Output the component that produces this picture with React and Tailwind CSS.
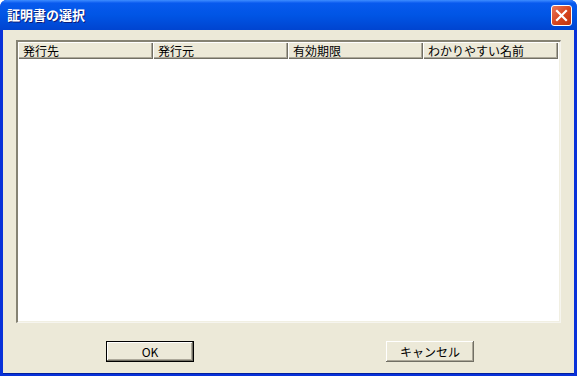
import React from 'react';

const columns = ['発行先', '発行元', '有効期限', 'わかりやすい名前'];

const font = { fontFamily: '"MS UI Gothic", "Noto Sans CJK JP", "Liberation Sans", sans-serif' };

function CloseButton() {
    return (
        <div className="absolute top-[5px] right-[5px] flex h-[21px] w-[21px] items-center justify-center rounded-[3px] border border-white bg-gradient-to-br from-[#e8775a] via-[#d8471f] to-[#c2330e]">
            <svg width="13" height="13" viewBox="0 0 13 13">
                <path d="M2 2 L11 11 M11 2 L2 11" stroke="#fff" strokeWidth="2.2" strokeLinecap="square" />
            </svg>
        </div>
    );
}

function XpButton({ label, isDefault }) {
    return (
        <button
            className={`h-[21px] w-[88px] bg-[#ece9d8] text-[12px] text-black ${isDefault ? 'border border-black shadow-[inset_-1px_-1px_0_#716f64,inset_1px_1px_0_#fff,inset_-2px_-2px_0_#aca899]' : 'shadow-[inset_-1px_-1px_0_#716f64,inset_1px_1px_0_#fff,inset_-2px_-2px_0_#aca899]'}`}
            style={font}
        >
            {label}
        </button>
    );
}

export default function App() {
    return (
        <div className="relative flex h-[376px] w-[577px] flex-col overflow-hidden rounded-t-[7px] bg-[#0831d9]" style={font}>
            {/* Title bar */}
            <div className="relative h-[30px] shrink-0 bg-gradient-to-b from-[#0a5bf0] via-[#0055e5] to-[#0044d0]">
                <div className="absolute inset-x-0 top-0 h-[3px] bg-gradient-to-b from-[#3d8cff] to-[#0a5bf0]" />
                <span className="absolute left-[7px] top-[7px] text-[13px] font-bold leading-[16px] text-white [text-shadow:1px_1px_0_#0a1c7a]">
                    証明書の選択
                </span>
                <CloseButton />
            </div>

            {/* Client area */}
            <div className="mx-[3px] mb-[3px] flex flex-1 flex-col bg-[#ece9d8] px-[13px] pt-[10px] shadow-[0_1px_0_#001ea0]">
                <div className="flex h-[283px] flex-col border-t-2 border-l-2 border-t-[#858273] border-l-[#858273] border-r border-b border-r-[#f6f5ef] border-b-[#f6f5ef] bg-white shadow-[inset_-1px_-1px_0_#f1efe2]">
                    <div className="flex h-[17px] shrink-0">
                        {columns.map((col, i) => (
                            <div
                                key={i}
                                className="flex h-full w-[135px] items-center bg-[#ece9d8] pl-[5px] text-[12px] leading-none text-black shadow-[inset_1px_1px_0_#fff,inset_-1px_-1px_0_#716f64,inset_-2px_-2px_0_#aca899]"
                            >
                                {col}
                            </div>
                        ))}
                    </div>
                </div>

                <div className="mt-[18px] flex pl-[90px]">
                    <XpButton label="OK" isDefault />
                    <div className="w-[192px]" />
                    <XpButton label="キャンセル" />
                </div>
            </div>
        </div>
    );
}
